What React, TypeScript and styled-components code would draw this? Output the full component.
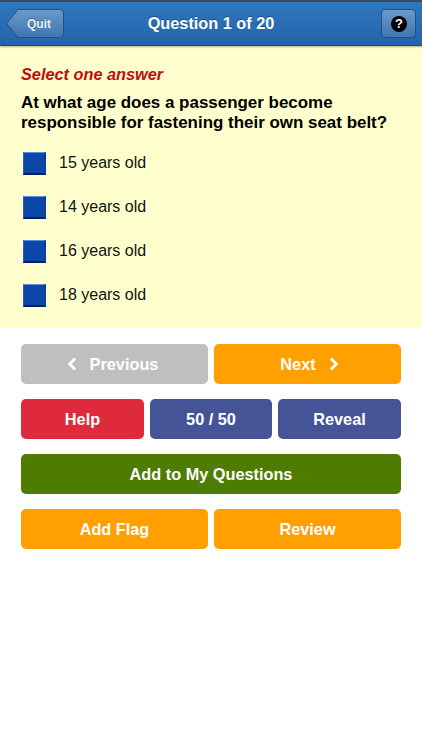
import React from "react";
import styled, { createGlobalStyle } from "styled-components";

const Global = createGlobalStyle`
  html, body { margin: 0; padding: 0; background: #fff; }
  body { font-family: "Liberation Sans", Arial, sans-serif; }
  * { box-sizing: border-box; }
`;

const Page = styled.div`
  width: 422px;
  height: 750px;
  background: #fff;
  overflow: hidden;
`;

const NavBar = styled.header`
  height: 46px;
  display: grid;
  grid-template-columns: 1fr auto 1fr;
  align-items: center;
  padding: 0 6px;
  background: linear-gradient(#2f76bd 0%, #2a6fb6 45%, #2263a8 100%);
  border-top: 2px solid #3e4a58;
  border-bottom: 1px solid #24466a;
  box-shadow: 0 1px 2px rgba(90, 90, 60, 0.5);
  position: relative;
`;

const NavTitle = styled.h1`
  margin: 0;
  color: #fff;
  font-size: 16.3px;
  font-weight: 700;
  text-shadow: 0 -1px 0 rgba(0, 0, 0, 0.35);
`;

const BackWrap = styled.button`
  width: 58px;
  height: 29px;
  padding: 0 0 0 8px;
  border: 0;
  background: none;
  color: #e8eff7;
  font: 700 12px "Liberation Sans", Arial, sans-serif;
  text-shadow: 0 -1px 0 rgba(0, 0, 0, 0.35);
  position: relative;
  display: flex;
  align-items: center;
  justify-content: center;
`;

const BackShape = styled.svg`
  position: absolute;
  inset: 0;
`;

const BackLabel = styled.span`
  position: relative;
`;

const HelpButton = styled.button`
  width: 35px;
  height: 29px;
  padding: 0;
  justify-self: end;
  display: flex;
  align-items: center;
  justify-content: center;
  border: 1px solid #24507f;
  border-radius: 4px;
  background: linear-gradient(#6d9ac9, #3d76b3);
`;

const QuestionPanel = styled.section`
  height: 282px;
  background: #ffffcd;
  padding: 18px 21px 0;
`;

const Prompt = styled.div`
  color: #c10c0c;
  font-size: 16.3px;
  line-height: 20px;
  font-weight: 700;
  font-style: italic;
`;

const QuestionText = styled.p`
  margin: 9px 0 8px;
  color: #000;
  font-size: 16.95px;
  line-height: 20px;
  font-weight: 700;
`;

const AnswerRow = styled.div`
  height: 44px;
  display: flex;
  align-items: center;
  gap: 13px;
  padding-left: 2px;
  color: #111;
  font-size: 16px;
`;

const AnswerBox = styled.span`
  width: 23px;
  height: 23px;
  background: #0b47a8;
  border-style: solid;
  border-width: 1px 2px 2px 1px;
  border-color: #5f8fd0 #0a3f92 #04235a #2a62b5;
`;

const Controls = styled.div`
  display: flex;
  flex-direction: column;
  gap: 15px;
  padding: 16px 21px 0;
`;

const ButtonRow = styled.div<{ $columns: string }>`
  display: grid;
  grid-template-columns: ${(p) => p.$columns};
  gap: 6px;
`;

const ActionButton = styled.button<{ $color: string }>`
  height: 40px;
  display: flex;
  align-items: center;
  justify-content: center;
  gap: 13px;
  padding: 0;
  border: 0;
  border-radius: 5px;
  background: ${(p) => p.$color};
  color: #fff;
  font: 700 16.3px "Liberation Sans", Arial, sans-serif;
`;

const PreviousButton = styled(ActionButton)`
  padding-right: 4px;
`;

const NextButton = styled(ActionButton)`
  padding-left: 4px;
`;

const Chevron = ({ left }: { left?: boolean }) => (
  <svg width="10" height="14" viewBox="0 0 10 14" fill="none">
    <path
      d={left ? "M8.2 1.4 2.6 7 8.2 12.6" : "M1.8 1.4 7.4 7 1.8 12.6"}
      stroke="#fff"
      strokeWidth="2.8"
    />
  </svg>
);

const answers = ["15 years old", "14 years old", "16 years old", "18 years old"];

export default function App() {
  return (
    <Page>
      <Global />
      <NavBar>
        <BackWrap>
          <BackShape width="58" height="29" viewBox="0 0 58 29">
            <defs>
              <linearGradient id="back" x1="0" y1="0" x2="0" y2="1">
                <stop offset="0" stopColor="#6d9ac9" />
                <stop offset="1" stopColor="#3d76b3" />
              </linearGradient>
            </defs>
            <path
              d="M.6 14.5 12 .5h42a3.5 3.5 0 0 1 3.5 3.5v21a3.5 3.5 0 0 1-3.5 3.5H12Z"
              fill="url(#back)"
              stroke="#24507f"
            />
          </BackShape>
          <BackLabel>Quit</BackLabel>
        </BackWrap>
        <NavTitle>Question 1 of 20</NavTitle>
        <HelpButton aria-label="Help">
          <svg width="16" height="16" viewBox="0 0 16 16">
            <circle cx="8" cy="8" r="8" fill="#000" />
            <text
              x="8"
              y="12.4"
              textAnchor="middle"
              fill="#fff"
              fontSize="13"
              fontWeight="700"
              fontFamily="Liberation Sans"
            >
              ?
            </text>
          </svg>
        </HelpButton>
      </NavBar>
      <QuestionPanel>
        <Prompt>Select one answer</Prompt>
        <QuestionText>
          At what age does a passenger become
          <br />
          responsible for fastening their own seat belt?
        </QuestionText>
        {answers.map((a) => (
          <AnswerRow key={a}>
            <AnswerBox />
            {a}
          </AnswerRow>
        ))}
      </QuestionPanel>
      <Controls>
        <ButtonRow $columns="1fr 1fr">
          <PreviousButton $color="#bfbfbf">
            <Chevron left /> Previous
          </PreviousButton>
          <NextButton $color="#ff9f00">
            Next <Chevron />
          </NextButton>
        </ButtonRow>
        <ButtonRow $columns="123px 122px 123px">
          <ActionButton $color="#de2a3a">Help</ActionButton>
          <ActionButton $color="#455497">50 / 50</ActionButton>
          <ActionButton $color="#455497">Reveal</ActionButton>
        </ButtonRow>
        <ActionButton $color="#4d7c00">Add to My Questions</ActionButton>
        <ButtonRow $columns="1fr 1fr">
          <ActionButton $color="#ff9f00">Add Flag</ActionButton>
          <ActionButton $color="#ff9f00">Review</ActionButton>
        </ButtonRow>
      </Controls>
    </Page>
  );
}
